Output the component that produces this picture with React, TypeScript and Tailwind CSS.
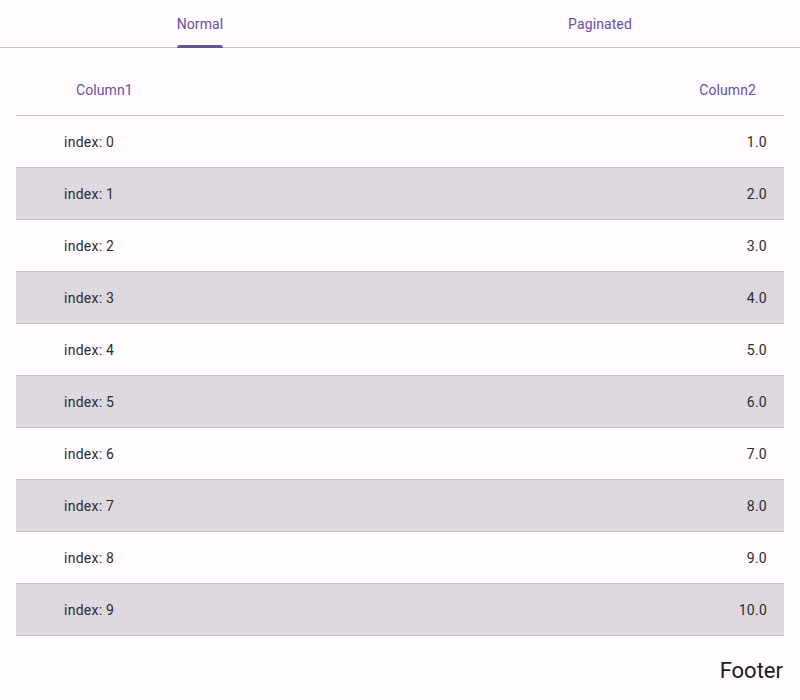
import React from "react";

export default function App() {
  const rows = Array.from({ length: 10 }, (_, i) => i);
  return (
    <div
      className="w-[800px] h-[700px] bg-[#fffbfe] overflow-hidden"
      style={{ fontFamily: "Roboto, 'Noto Sans', sans-serif" }}
    >
      <div className="relative h-[48px] flex border-b border-[#cac4d0]">
        <div className="flex-1 flex justify-center">
          <div className="relative flex items-center h-full pt-[2px]">
            <span className="text-[14px] text-[#6750a4] tracking-[0.1px]">Normal</span>
            <div className="absolute left-0 right-0 bottom-[-1px] h-[3px] bg-[#6750a4] rounded-t-[3px]" />
          </div>
        </div>
        <div className="flex-1 flex justify-center items-center pt-[2px]">
          <span className="text-[14px] text-[#6750a4] tracking-[0.1px]">Paginated</span>
        </div>
      </div>
      <div className="mx-4 mt-[11px]">
        <div className="h-[57px] flex items-center justify-between border-b border-[#cac4d0] text-[14px] text-[#6750a4] tracking-[0.1px]">
          <span className="pl-[60px] pt-[6px]">Column1</span>
          <span className="pr-[28px] pt-[6px]">Column2</span>
        </div>
        {rows.map((i) => (
          <div
            key={i}
            className={`h-[52px] flex items-center justify-between border-b border-[#cac4d0] text-[14px] text-[#2e2b33] tracking-[0.25px] ${
              i % 2 === 1 ? "bg-[#ddd8de]" : ""
            }`}
          >
            <span className="pl-[48px] pt-[2px]">index: {i}</span>
            <span className="pr-[17px] pt-[2px]">{(i + 1).toFixed(1)}</span>
          </div>
        ))}
        <div className="flex justify-end pt-[21px]">
          <span className="text-[22px] text-[#1d1b20] leading-[28px] mr-[1px]">Footer</span>
        </div>
      </div>
    </div>
  );
}
